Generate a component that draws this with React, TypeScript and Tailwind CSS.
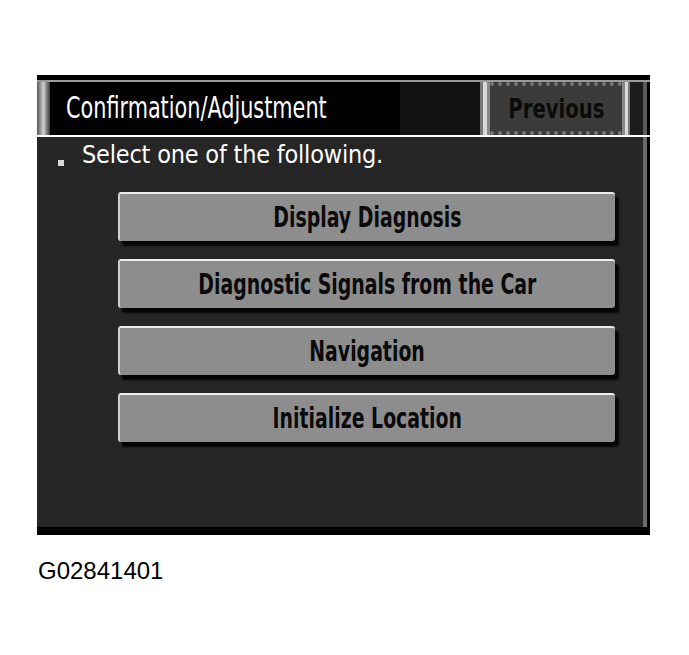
import React from 'react';

const NARROW = { fontFamily: '"DejaVu Sans Condensed", "Liberation Sans Narrow", "Liberation Sans", sans-serif' };

const OPTIONS = [
  'Display Diagnosis',
  'Diagnostic Signals from the Car',
  'Navigation',
  'Initialize Location',
];

function OptionButton({ label }: { label: string }) {
  return (
    <div className="flex h-[49px] w-[497px] items-center justify-center rounded-[3px] border-t-2 border-l-2 border-t-[#ececec] border-l-[#cfcfcf] bg-[#8d8d8d] shadow-[4px_5px_2px_#050505]">
      <span className="inline-block scale-x-[0.75] text-[28px] font-bold leading-none whitespace-nowrap text-[#0a0a0a]" style={NARROW}>
        {label}
      </span>
    </div>
  );
}

export default function App() {
  return (
    <div className="h-[655px] w-[689px] bg-white pt-[75px] pl-[37px]">
      {/* screen */}
      <div className="flex h-[460px] w-[613px] flex-col bg-black pt-[5px] pb-[8px]">
        {/* header */}
        <div className="flex h-[55px] border-t-2 border-t-[#9a9a9a]">
          <div className="w-[13px] bg-gradient-to-r from-[#5a5a5a] via-[#d0d0d0] to-[#3a3a3a]" />
          <div className="flex min-w-0 flex-1 items-center overflow-hidden pl-[16px] pb-[2px]">
            <span className="inline-block origin-left scale-x-[0.77] text-[30px] leading-none whitespace-nowrap text-white" style={NARROW}>
              Confirmation/Adjustment
            </span>
          </div>
          <div className="w-[80px] bg-[#121212]" />
          <div className="flex">
            <div className="w-[3px] bg-[#777]" />
            <div className="w-[4px] bg-[#d8d8d8]" />
            <div className="w-[3px] bg-[#888]" />
            <div className="flex w-[132px] items-center justify-center border-y-4 border-dotted border-y-[#777] bg-[#3b3b3b]">
              <span className="inline-block scale-x-[0.81] text-[27px] font-bold leading-none whitespace-nowrap text-[#0b0b0b]" style={NARROW}>
                Previous
              </span>
            </div>
            <div className="w-[3px] bg-[#888]" />
            <div className="w-[3px] bg-[#d8d8d8]" />
            <div className="w-[2px] bg-[#777]" />
          </div>
          <div className="w-[13px] bg-[#1c1c1c]" />
          <div className="w-[4px] bg-[#5a5a5a]" />
          <div className="w-[3px] bg-black" />
        </div>
        <div className="h-[2px] bg-white" />

        {/* body */}
        <div className="flex flex-1">
          <div className="flex flex-1 flex-col bg-[#262626]">
            <div className="flex items-end pt-[4px] pl-[21px]">
              <div className="mb-[3px] mr-[18px] h-[6px] w-[6px] bg-[#d8d8d8]" />
              <span className="text-[25px] leading-[28px] tracking-[-0.2px] whitespace-nowrap text-white" style={NARROW}>
                Select one of the following.
              </span>
            </div>
            <div className="flex flex-col gap-[18px] pt-[23px] pl-[81px]">
              {OPTIONS.map((label) => (
                <OptionButton key={label} label={label} />
              ))}
            </div>
          </div>
          <div className="w-[4px] bg-[#6a6a6a]" />
          <div className="w-[3px] bg-black" />
        </div>
      </div>

      {/* caption */}
      <div className="pt-[24px] pl-[1px] text-[24px] leading-none text-black" style={{ fontFamily: '"Liberation Sans", Arial, sans-serif' }}>
        G02841401
      </div>
    </div>
  );
}
